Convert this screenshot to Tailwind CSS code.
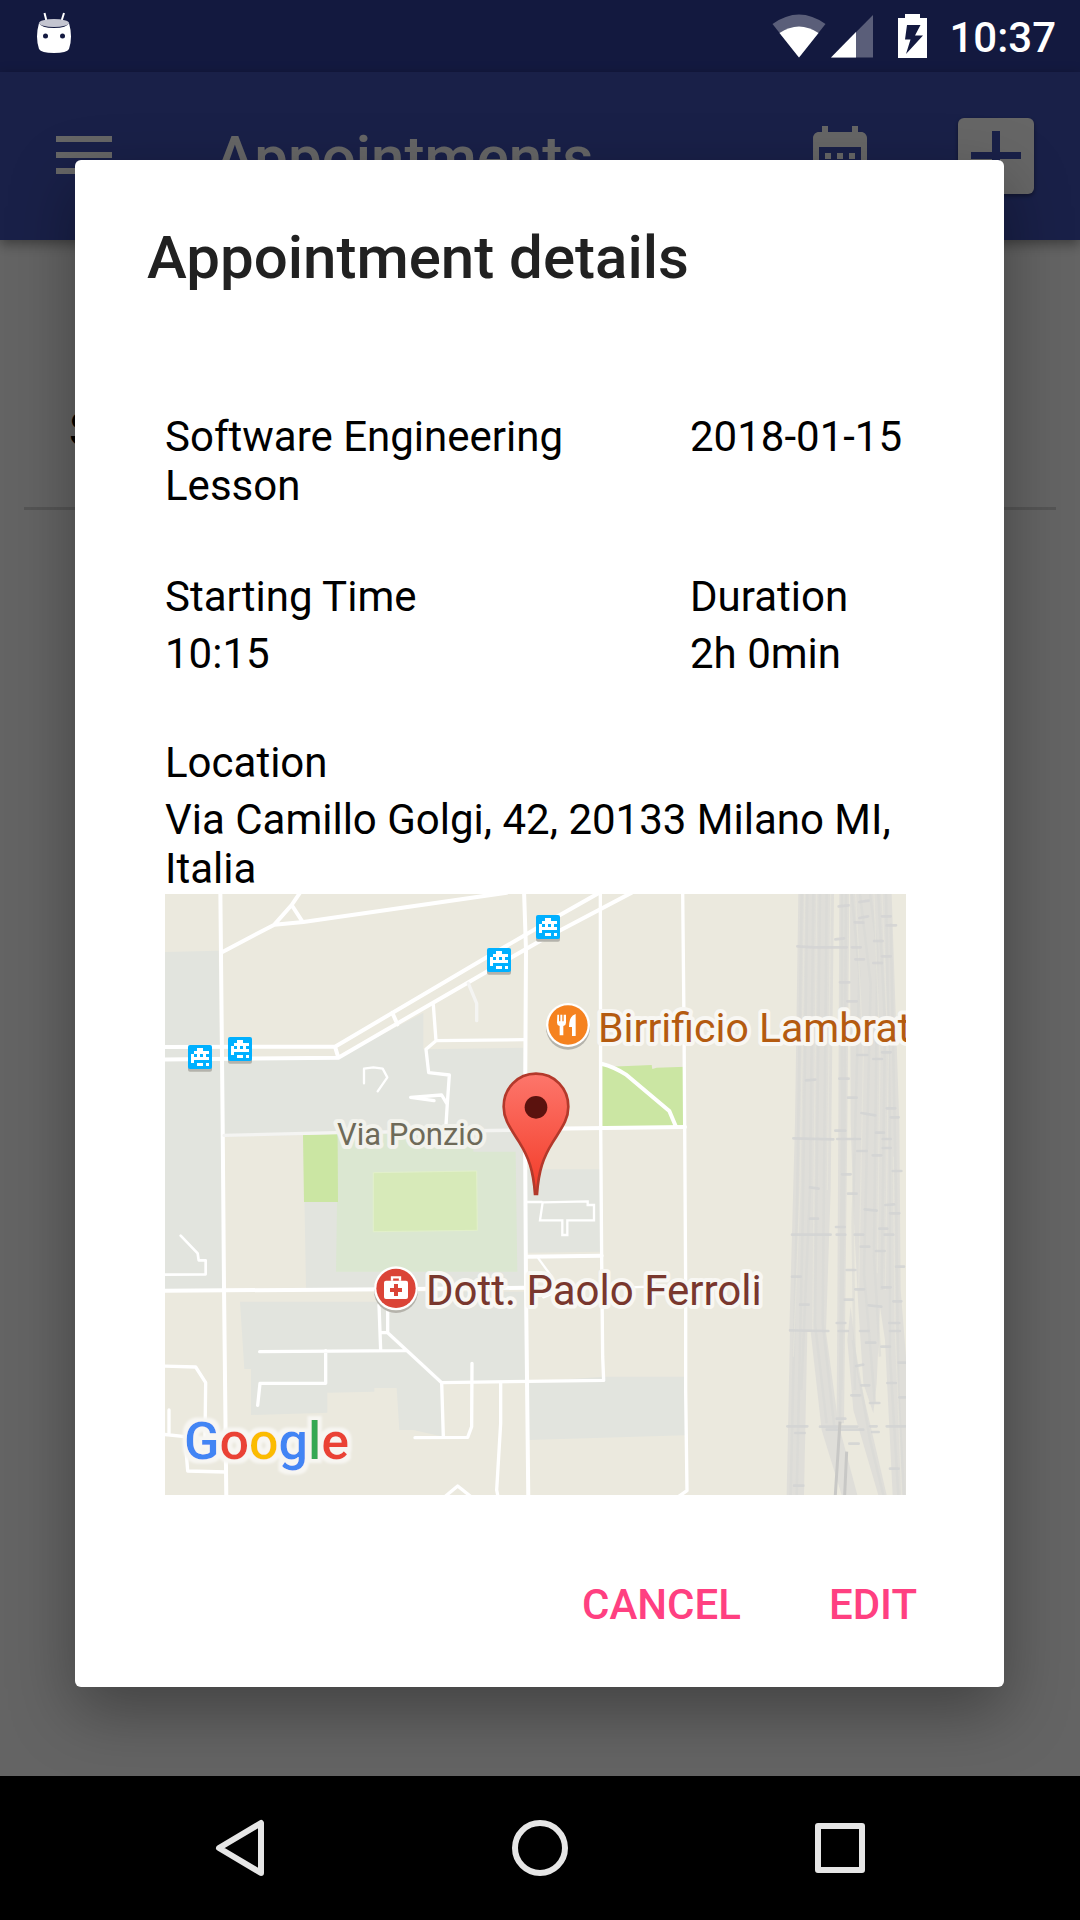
<!DOCTYPE html>
<html lang="en">
<head>
<meta charset="utf-8">
<meta name="viewport" content="width=device-width, initial-scale=1">
<title>Appointments</title>
<script src="https://cdn.jsdelivr.net/npm/@tailwindcss/browser@4"></script>
</head>
<body class="bg-black font-['Roboto',sans-serif]">
<div class="relative flex min-h-screen flex-col">

  <!-- App behind the dialog -->
  <div class="flex flex-1 flex-col bg-[#fafafa]" aria-hidden="true" inert>
    <div class="h-[72px] bg-[#303f9f]"></div>
    <header class="relative flex h-[168px] items-center bg-[#3f51b5] pr-[46px] pl-14 text-white shadow-[0_4px_12px_rgba(0,0,0,0.4)]">
      <button type="button" aria-label="Menu">
        <svg class="block h-10 w-14" viewBox="0 0 56 40" fill="currentColor"><path d="M0 0h56v6H0zM0 16h56v6H0zM0 32h56v6H0z"/></svg>
      </button>
      <h1 class="ml-[103px] flex-1 pt-1 text-[60px] leading-[70px] font-medium">Appointments</h1>
      <button type="button" aria-label="Calendar">
        <svg class="block size-[72px]" viewBox="0 0 24 24" fill="currentColor"><path d="M9 11H7v2h2v-2zm4 0h-2v2h2v-2zm4 0h-2v2h2v-2zm2-7h-1V2h-2v2H8V2H6v2H5c-1.11 0-1.99.9-1.99 2L3 20c0 1.1.89 2 2 2h14c1.1 0 2-.9 2-2V6c0-1.1-.9-2-2-2zm0 16H5V9h14v11z"/></svg>
      </button>
      <button type="button" aria-label="Add appointment" class="ml-[82px] rounded-md bg-white text-[#3f51b5] shadow-[0_2px_4px_rgba(0,0,0,0.4)]">
        <svg class="block size-[76px]" viewBox="0 0 76 76" fill="currentColor"><path d="M34 13h8v21h21v7H42v21h-8V41H13v-7h21z"/></svg>
      </button>
    </header>
    <ul class="mx-6">
      <li class="border-b-3 border-[#d4d4d4] pt-[162px] pb-[49px] pl-[45px] text-[48px] leading-[56px] text-black">Software Engineering Lesson</li>
    </ul>
  </div>

  <!-- System navigation -->
  <nav class="relative z-20 flex h-36 items-center justify-center gap-[228px] bg-black text-[#e6e6e6]" aria-label="System">
    <button type="button" aria-label="Back">
      <svg class="block size-[72px]" viewBox="0 0 72 72" fill="none" stroke="currentColor" stroke-width="6" stroke-linejoin="round"><path d="M57 11v50L15 36z"/></svg>
    </button>
    <button type="button" aria-label="Home">
      <svg class="block size-[72px]" viewBox="0 0 72 72" fill="none" stroke="currentColor" stroke-width="6"><circle cx="36" cy="36" r="25"/></svg>
    </button>
    <button type="button" aria-label="Recent apps">
      <svg class="block size-[72px]" viewBox="0 0 72 72" fill="none" stroke="currentColor" stroke-width="6" stroke-linejoin="round"><path d="M14 14h44v44H14z"/></svg>
    </button>
  </nav>

  <!-- Scrim, status bar and dialog -->
  <div class="absolute inset-0 z-10 flex flex-col overflow-hidden bg-black/60">
    <div class="flex h-[72px] items-center pr-6 pl-9 text-white">
      <svg class="mb-2 h-11 w-9" viewBox="0 0 36 44" fill="currentColor">
        <path d="M8.500 3l2 8M28 3l-2.500 8" stroke="currentColor" stroke-width="2"/>
        <path d="M3 13Q5 18 18 18Q31 18 33 13Q37 27 33 39Q31 43 18 43Q5 43 3 39Q-1 27 3 13z"/>
        <ellipse cx="18" cy="13" rx="15" ry="4" fill="#c4c5d0"/>
        <circle cx="9.500" cy="26" r="2.500" fill="#131940"/><circle cx="26.500" cy="26" r="2.500" fill="#131940"/>
      </svg>
      <svg class="ml-auto h-[44px] w-[54px]" viewBox="0 0 54 44" fill="currentColor">
        <path d="M.5 10Q27-9 53.500 10L27 43.500z" opacity=".3"/>
        <path d="M7.500 19Q27 6 46.500 19L27 43.500z"/>
      </svg>
      <svg class="ml-[5px] h-[44px] w-[42px]" viewBox="0 0 42 44" fill="currentColor">
        <path d="M42 1v42.500H0z" opacity=".3"/><path d="M25 18v25.500H0z"/>
      </svg>
      <svg class="ml-[25px] h-[46px] w-[29px]" viewBox="0 0 29 46" fill="currentColor">
        <path d="M7 1h15v4h7v40H0V5h7z"/>
        <path d="M9 12h13.500l-5.500 10.500h8L8 41l4.500-14.500H7z" fill="#131940"/>
      </svg>
      <time class="ml-[22px] pt-0.5 text-[42px] leading-[49px] font-medium">10:37</time>
    </div>

    <section role="dialog" aria-modal="true" aria-labelledby="dialog-title" class="mt-[88px] mr-[76px] ml-[75px] rounded-md bg-white pt-[63px] pb-[34px] text-[42px] leading-[49px] text-black shadow-[0_24px_64px_rgba(0,0,0,0.34)]">
      <h2 id="dialog-title" class="pl-[72px] text-[60px] leading-[70px] font-medium text-[#212121]">Appointment details</h2>

      <div class="mt-[119px] pr-[98px] pl-[90px]">
        <div class="grid grid-cols-[1fr_216px] gap-y-[62px]">
          <p>Software Engineering Lesson</p>
          <p>2018-01-15</p>
          <dl class="flex flex-col gap-2"><dt>Starting Time</dt><dd>10:15</dd></dl>
          <dl class="flex flex-col gap-2"><dt>Duration</dt><dd>2h 0min</dd></dl>
        </div>
        <dl class="mt-[60px] flex flex-col gap-2"><dt>Location</dt><dd>Via Camillo Golgi, 42, 20133 Milano MI, Italia</dd></dl>

        <svg class="mt-px block h-auto w-full overflow-hidden" viewBox="0 0 741 601" role="img" aria-label="Map of Via Camillo Golgi">
          <defs>
            <linearGradient id="pin" x1="0" y1="0" x2="0" y2="1"><stop offset="0" stop-color="#fd766b"/><stop offset="1" stop-color="#f33b28"/></linearGradient>
            <filter id="halo" x="-10%" y="-20%" width="120%" height="140%">
              <feMorphology in="SourceAlpha" operator="dilate" radius="4" result="spread"/>
              <feGaussianBlur in="spread" stdDeviation="1" result="soft"/>
              <feFlood flood-color="#f7f6f2"/>
              <feComposite in2="soft" operator="in"/>
              <feMerge><feMergeNode/><feMergeNode in="SourceGraphic"/></feMerge>
            </filter>
            <g id="tram">
              <rect x="0" y="8" width="72" height="72" rx="6" fill="#b4b2ab"/>
              <rect width="72" height="72" rx="6" fill="#00b0ff"/>
              <path fill="#fff" d="M27 9h18v9h18v9h-9v9h9v9H18v9H9V27h9v-9h9zM18 27v9h9v-9zM36 27v9h9v-9zM27 54h18v9H27zM54 54h9v9h-9z"/>
            </g>
          </defs>
          <rect width="741" height="601" fill="#ebe9de"/>
          <g transform="scale(.33333) translate(-15 -12)">
            <!-- Blocks -->
            <g fill="#e2e4de">
              <path d="M15 186L176 182L190 1200H15z"/>
              <path d="M188 508L535 504L790 368V478L1090 473L1100 1195H438L430 735L192 740z"/>
              <path d="M1096 838H1322V1085L1098 1088z"/>
              <path d="M240 1235H650V1205H1095L1102 1470L845 1480L850 1640L760 1620H718L710 1494H643V1505L502 1508V1568L273 1575V1437H253z"/>
              <path d="M1105 1475L1330 1460H1575V1636L1105 1650z"/>
            </g>
            <path fill="#dbe7d1" d="M534 732L940 728V785H1067L1072 1145H528z"/>
            <path fill="#cbe6a3" d="M429 735L533 732L534 936H432zM1327 522L1350 530L1475 525L1477 537L1490 533L1578 530L1570 708H1327z"/>
            <path fill="#d7eab9" stroke="#e2f0cb" stroke-width="3" d="M640 848L950 843L952 1021L640 1025z"/>

            <!-- Railway yard -->
            <g fill="#dfded9">
              <path d="M1915 12H2022L2012 900L1998 1325H1888L1905 700z"/>
              <path d="M1890 1325H1942L1932 1815H1880z"/>
              <path d="M1952 1325H1998L2035 1600L2092 1815H2045L1985 1620z"/>
              <path d="M2038 12H2068L2062 700L2052 1600H2030L2035 700z"/>
              <path d="M2070 12H2195L2218 700L2222 1200L2238 1400V1815H2198L2175 1350L2160 1250L2150 1480L2140 1570L2110 1480L2095 1250L2082 1000L2072 700z"/>
              <path d="M2072 1250L2095 1450L2180 1815H2155L2080 1560L2062 1350z"/>
            </g>
            <g fill="none" stroke="#d9d9d6" stroke-width="8" opacity=".55">
              <path d="M1925 12L1912 900L1892 1815M1942 12L1928 1000L1910 1815M1960 12L1950 900L1924 1500M1980 12L1965 1300L2000 1600M2000 12L1988 1300L2024 1620"/>
              <path d="M2046 12V700L2040 1600M2058 12L2052 900L2044 1500M2075 12L2098 250L2078 1000L2085 1500M2100 12L2132 280L2112 1150L2145 1540"/>
              <path d="M2130 12L2152 180L2142 1100L2160 1400M2155 12L2175 400L2165 1200M2178 12L2190 700V1400L2215 1815M2192 100L2208 900L2215 1500L2232 1815M2078 1350L2130 1650L2170 1815"/>
            </g>
            <g fill="none" stroke="#ebe9de" stroke-width="4" opacity=".45">
              <path d="M1934 12L1920 900L1900 1400M1970 12L1958 1325M2012 12L2002 900M2087 12L2110 500L2096 1200M2142 12L2160 500L2152 1150M2166 12L2185 500L2176 1200M2200 800L2205 1300L2225 1815"/>
            </g>
            <g fill="none" stroke="#d3d4d4" stroke-width="8" stroke-linecap="round" opacity=".85">
              <path d="M1912 169L1960 172L2060 172M2076 172H2102M2036 49L2066 46M2098 36L2126 32M2166 79H2192M2180 106H2208M2084 97L2110 98M2098 84L2124 79M2026 148L2052 145M2142 153H2168M2166 199H2192M2086 208H2112M2140 219H2166M2040 277H2068M2062 334H2090"/>
              <path d="M1938 571L1966 569M2038 566H2066M2092 495H2122M2140 507H2166M2166 487H2192M2064 623H2090M2104 669L2146 676M2180 655H2206M2192 682H2216M2026 722H2056M2148 728H2172M1900 745L2020 748M2032 747H2100M2168 747H2192M2168 774H2192M2092 783H2120M2138 796H2164M2198 843H2224M2046 853H2072M1950 892L1976 896M2064 911H2090"/>
              <path d="M1896 1034L2012 1034M2030 1034H2056M2084 1034H2110M2174 1034H2200M2028 1011H2054M1950 986H1974M2114 958L2150 962M2176 945L2202 943M2190 970H2218M2158 1016H2182M2102 1070H2128M2148 1083H2174M2208 1130H2232M2060 1140H2086M1896 1160H1922M2086 1198H2112M2166 1192H2192M2054 1229H2078M1920 1244H1946M2126 1246L2164 1250M2200 1234H2224M2030 1299H2056M2188 1299H2218"/>
              <path d="M1890 1321L2005 1323M2036 1323H2064M2100 1323H2126M2190 1323H2220M2118 1358H2146M2164 1370H2190M2088 1428L2110 1424M2216 1418H2236M2104 1486H2128M2182 1479H2208M2074 1516H2100M2130 1539H2158M2218 1522H2236M2030 1586H2056M1882 1609H1942M1980 1610H2092M2130 1609H2150M2180 1609H2236M2000 1619H2110M2068 1661H2096M1906 1629H1934M2136 1626H2156M2190 1736H2216M1902 1787H1930"/>
            </g>
            <path fill="none" stroke="#c8c8c6" stroke-width="9" d="M2040 1595L2026 1815M2060 1685L2054 1815"/>

            <!-- Streets -->
            <g fill="none" stroke="#fff" stroke-width="12" stroke-linejoin="round" stroke-linecap="round">
              <path d="M181 0L188 700L192 1190L199 1830M1092 0L1098 180L1095 700L1098 1190L1105 1830"/>
              <path d="M1321 0L1322 700L1325 1110L1328 1400L1331 1471L1105 1474L845 1478M1568 0L1572 400L1574 700L1577 1190V1500L1581 1802L1555 1820" stroke-width="10"/>
              <path d="M0 1202L700 1198L1095 1193M183 188L343 104L430 96L1040 8M343 104L395 45L420 8M395 45L428 96"/>
              <path d="M0 471L525 470L975 205L1130 115L1318 8M0 509L535 503L980 245L1140 153L1415 8M525 470L535 503M697 368L712 403"/>
              <path d="M820 345L828 452L798 478L806 548L868 555L862 640L857 720M828 452L1095 449M860 640L845 615L752 622L822 632" stroke-width="10"/>
              <path d="M612 580V536L640 532L668 536L682 562L653 604" stroke-width="7"/>
              <path d="M925 280L950 340V392M192 736L530 728L1095 720" stroke="#f4f4f2" stroke-width="10"/>
              <path d="M1098 717L1575 711M1327 522Q1360 530 1397 553L1528 663L1547 708M1098 1100L1325 1097"/>
              <path d="M1098 936H1145M1133 1102L1175 1160L1180 1210L1150 1222M1400 1193L1460 1190M1148 937L1283 934V945H1302V991H1222V1035H1207V991H1140z" stroke-width="7" stroke-linejoin="miter"/>
              <path d="M62 1037L113 1090L116 1111H137V1153L0 1154" stroke-width="8"/>
              <path d="M299 1385L735 1382M497 1382V1480H300L293 1546M657 1245L662 1380M683 1260V1328L845 1478L850 1640M660 1328H683M936 1420L935 1610L923 1642L765 1643M1022 1478V1600L1010 1800L1016 1830M850 1824L893 1788L938 1824" stroke-width="10"/>
              <path d="M0 1428L107 1431L137 1478L135 1640M27 1560V1630M0 1632L75 1640L83 1743L198 1746" stroke-width="10"/>
            </g>

            <!-- Tram stops -->
            <use href="#tram" x="84" y="465"/><use href="#tram" x="204" y="441"/><use href="#tram" x="981" y="174"/><use href="#tram" x="1128" y="75"/>

            <!-- Restaurant -->
            <circle cx="1224" cy="413" r="66" fill="#b5b3ab"/><circle cx="1224" cy="405" r="66" fill="#fff"/><circle cx="1224" cy="405" r="59" fill="#f5821f"/>
            <path fill="#fff" d="M1192 374h5v20h4v-20h6v20h4v-20h7v24q0 8-8 10v28h-11v-28q-8-2-8-10zM1247 372v66h-11v-27h-9q0-34 20-39z"/>
            <!-- Doctor -->
            <circle cx="708" cy="1203" r="66" fill="#b5b3ab"/><circle cx="708" cy="1195" r="66" fill="#fff"/><circle cx="708" cy="1195" r="59" fill="#db4437"/>
            <rect x="672" y="1172" width="72" height="55" rx="6" fill="#fff"/><path d="M696 1172V1162H720V1172" fill="none" stroke="#fff" stroke-width="7"/>
            <path fill="#db4437" d="M702 1182h12v12h12v12h-12v12h-12v-12h-12v-12h12z"/>
            <!-- Selected place -->
            <path fill="url(#pin)" stroke="#b3392b" stroke-width="8" d="M1128 551C1072 551 1031 596 1031 650C1031 690 1052 715 1078 757C1106 802 1120 840 1125 912H1131C1136 840 1150 802 1178 757C1204 715 1225 690 1225 650C1225 596 1184 551 1128 551z"/>
            <circle cx="1128" cy="652" r="34" fill="#5b120e"/>
          </g>

          <g stroke-linejoin="round" class="[paint-order:stroke]">
            <text x="172" y="251" font-size="31" fill="#6e6a59" stroke="#f2f2ec" stroke-width="8">Via Ponzio</text>
            <text x="433" y="148" font-size="41" fill="#b45b10" stroke="#f8f7f3" stroke-width="8">Birrificio Lambrate</text>
            <text x="261" y="411" font-size="42" fill="#79372e" stroke="#f8f7f3" stroke-width="8">Dott. Paolo Ferroli</text>
          </g>
          <text x="19" y="565" font-size="52" filter="url(#halo)" class="font-medium"><tspan fill="#4285f4">G</tspan><tspan fill="#ea4335">o</tspan><tspan fill="#fbbc05">o</tspan><tspan fill="#4285f4">g</tspan><tspan fill="#34a853">l</tspan><tspan fill="#ea4335">e</tspan></text>
        </svg>
      </div>

      <div class="mt-[61px] flex justify-end gap-10 pr-[63px] font-medium text-[#ff4081]">
        <button type="button" class="px-6 py-6">CANCEL</button>
        <button type="button" class="px-6 py-6">EDIT</button>
      </div>
    </section>
  </div>
</div>
</body>
</html>
